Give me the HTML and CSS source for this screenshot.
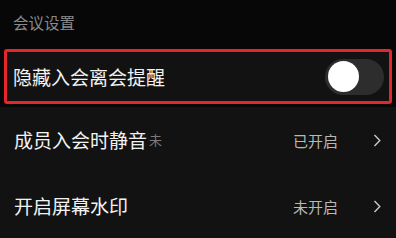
FILE: index.html
```html
<!DOCTYPE html>
<html lang="zh">
<head>
<meta charset="utf-8">
<link rel="stylesheet" href="styles.css">
</head>
<body>
<div class="page">
  <div class="section-title">会议设置</div>
  <div class="row row-highlight">
    <span class="label">隐藏入会离会提醒</span>
    <span class="toggle"><span class="knob"></span></span>
  </div>
  <div class="row row-link">
    <span class="label">成员入会时静音<span class="ghost">未</span></span>
    <span class="value">已开启</span>
    <svg class="chev" width="8" height="13" viewBox="0 0 8 13"><path d="M1.5 1 L6.8 6.5 L1.5 12" fill="none" stroke="#c8c8c8" stroke-width="1.4"/></svg>
  </div>
  <div class="row row-link">
    <span class="label">开启屏幕水印</span>
    <span class="value">未开启</span>
    <svg class="chev" width="8" height="13" viewBox="0 0 8 13"><path d="M1.5 1 L6.8 6.5 L1.5 12" fill="none" stroke="#c8c8c8" stroke-width="1.4"/></svg>
  </div>
</div>
</body>
</html>
```
FILE: styles.css
```css
html, body {
  margin: 0;
  padding: 0;
  background: #070707;
}
body {
  width: 396px;
  height: 238px;
  overflow: hidden;
  font-family: "Noto Sans CJK SC", "Noto Sans", sans-serif;
}
.page {
  display: flex;
  flex-direction: column;
}
.section-title {
  height: 48px;
  box-sizing: border-box;
  padding: 11px 0 0 13px;
  font-size: 15.5px;
  line-height: 22px;
  color: #8a8a8a;
}
.row {
  display: flex;
  align-items: center;
  box-sizing: border-box;
  background: #121212;
}
.row-highlight {
  margin: 1px 4px 0 4px;
  height: 55px;
  border: 3px solid #e5262a;
  border-radius: 3px;
  padding: 0 5px 0 6px;
  justify-content: space-between;
}
.row-link {
  height: 66px;
  padding: 0 15px 0 14px;
  margin-top: 3px;
}
.row-link + .row-link {
  margin-top: 0;
}
.label {
  font-size: 19px;
  color: #f2f2f2;
  line-height: 24px;
}
.ghost {
  font-size: 13px;
  color: #7a7a7a;
  margin-left: 2px;
  vertical-align: 3px;
}
.value {
  margin-left: auto;
  font-size: 15px;
  color: #b8b8b8;
  margin-right: 35px;
}
.chev {
  display: block;
}
.toggle {
  width: 59px;
  height: 36px;
  border-radius: 18px;
  background: #2d2d2d;
  display: flex;
  align-items: center;
  padding-left: 3px;
  box-sizing: border-box;
}
.knob {
  width: 31px;
  height: 31px;
  border-radius: 50%;
  background: #ffffff;
}
```
